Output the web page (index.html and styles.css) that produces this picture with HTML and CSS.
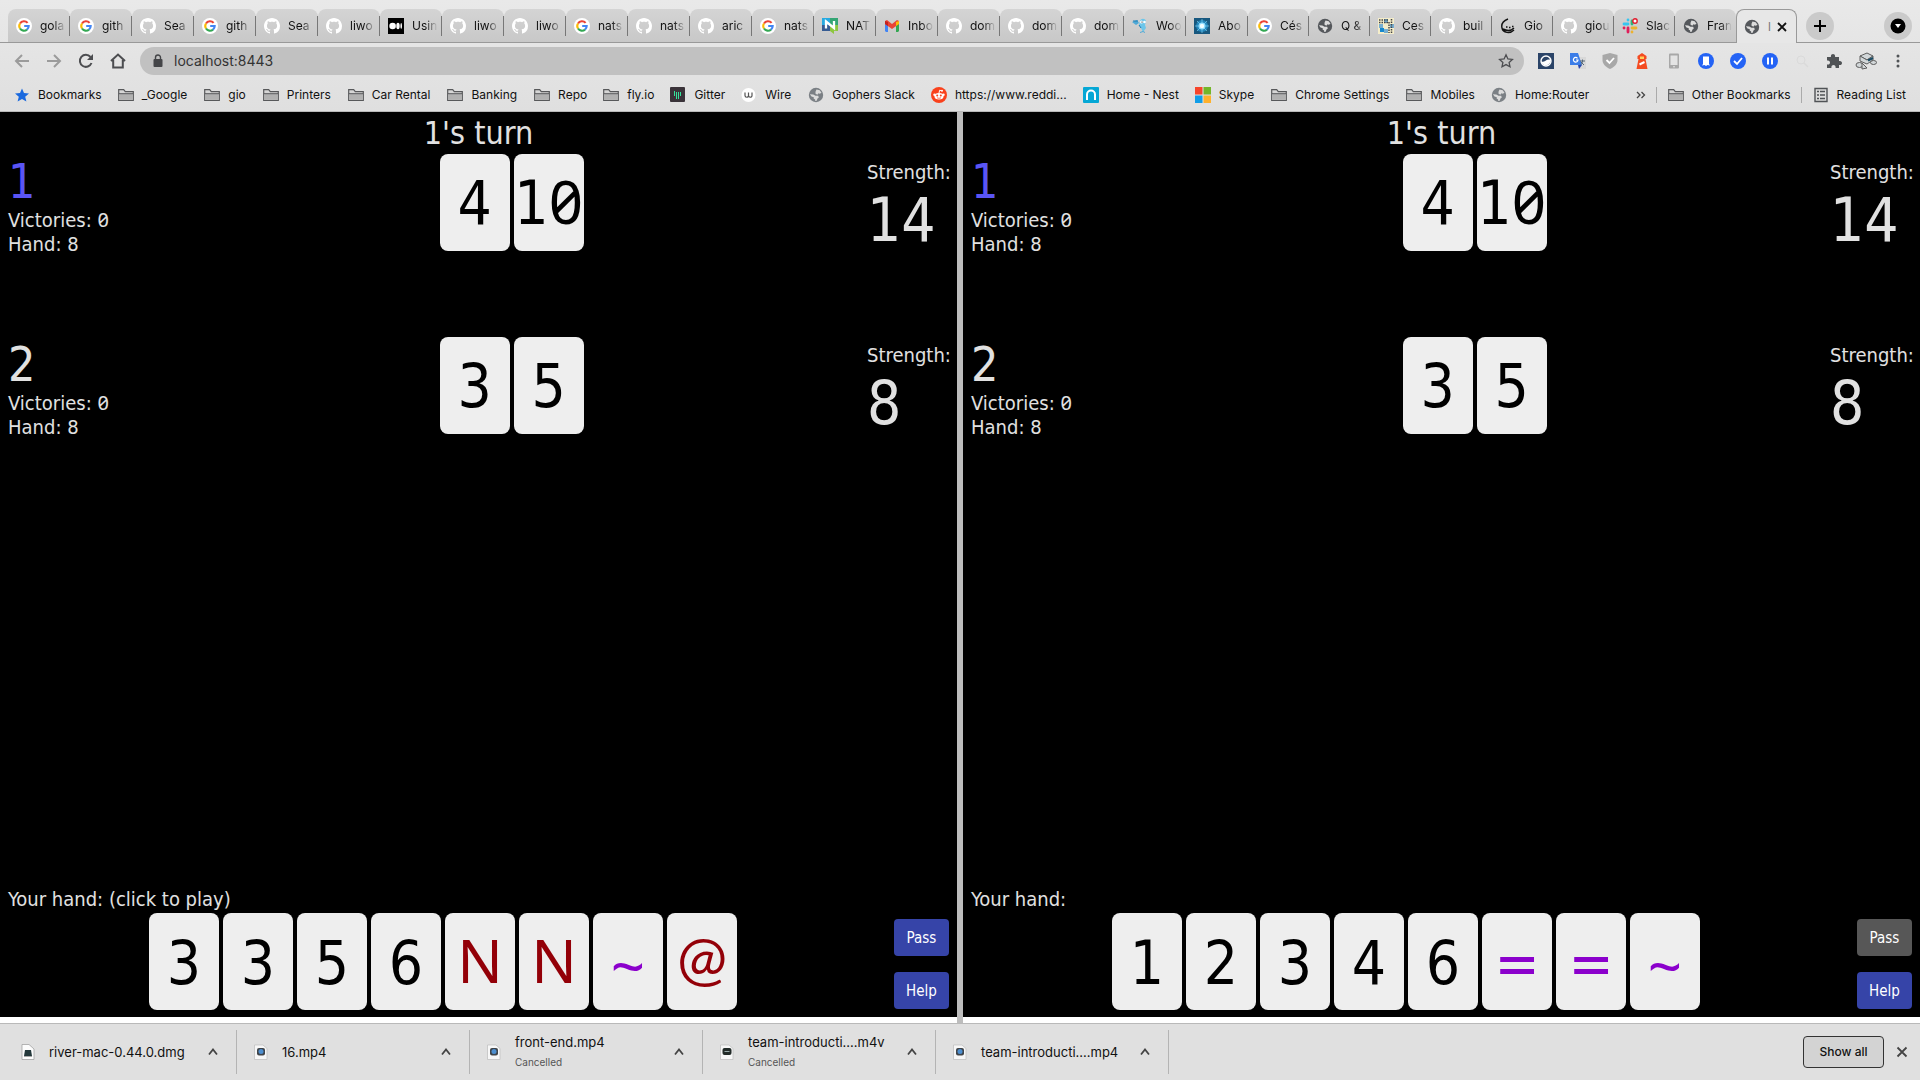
FILE: index.html
```html
<!DOCTYPE html>
<html lang="en">
<head>
<meta charset="utf-8">
<title>localhost:8443</title>
<link rel="stylesheet" href="styles.css">
</head>
<body>
<svg class="sprite" aria-hidden="true">
  <symbol id="google" viewBox="0 0 16 16"><circle cx="8" cy="8" r="8" fill="#fff"/><g fill="none" stroke-width="2.1"><path d="M4 5.500A4.700 4.700 0 0 1 11.600 4.900" stroke="#ea4335"/><path d="M4 5.500A4.700 4.700 0 0 0 4 10.500" stroke="#fbbc05"/><path d="M4 10.500A4.700 4.700 0 0 0 11 11.600" stroke="#34a853"/><path d="M11 11.600A4.700 4.700 0 0 0 12.700 8H8.200" stroke="#4285f4"/></g></symbol>
  <symbol id="github" viewBox="0 0 16 16"><path fill="#fff" d="M8 0C3.58 0 0 3.58 0 8c0 3.54 2.29 6.53 5.47 7.59.4.07.55-.17.55-.38 0-.19-.01-.82-.01-1.49-2.01.37-2.53-.49-2.69-.94-.09-.23-.48-.94-.82-1.13-.28-.15-.68-.52-.01-.53.63-.01 1.08.58 1.23.82.72 1.21 1.87.87 2.33.66.07-.52.28-.87.51-1.07-1.78-.2-3.64-.89-3.64-3.95 0-.87.31-1.59.82-2.15-.08-.2-.36-1.02.08-2.12 0 0 .67-.21 2.2.82.64-.18 1.32-.27 2-.27s1.36.09 2 .27c1.53-1.04 2.2-.82 2.2-.82.44 1.1.16 1.92.08 2.12.51.56.82 1.27.82 2.15 0 3.07-1.87 3.75-3.65 3.95.29.25.54.73.54 1.48 0 1.07-.01 1.93-.01 2.2 0 .21.15.46.55.38A8.01 8.01 0 0 0 16 8c0-4.42-3.58-8-8-8z"/></symbol>
  <symbol id="medium" viewBox="0 0 16 16"><path d="M0 0h16v16H0z"/><g fill="#fff"><circle cx="4.600" cy="8" r="3.300"/><ellipse cx="10" cy="8" rx="1.700" ry="3.200"/><ellipse cx="13.200" cy="8" rx=".8" ry="3"/></g></symbol>
  <symbol id="nats" viewBox="0 0 16 16"><path fill="#27aae1" d="M0 0h8v7H0z"/><path fill="#34a574" d="M8 0h8v7H8z"/><path fill="#375c93" d="M0 7h8v6H0z"/><path fill="#8dc63f" d="M8 7h8v6h-4v3l-4-3z"/><path d="M4 10.500V3.500L12 10V3" fill="none" stroke="#fff" stroke-width="2.300"/></symbol>
  <symbol id="gmail" viewBox="0 0 16 16"><path fill="#4285f4" d="M1 3h3v11H2l-1-1z"/><path fill="#34a853" d="M12 3h3v10l-1 1h-2z"/><path fill="#ea4335" d="M1 3l2-1 5 4 5-4 2 1v3l-7 5-7-5z"/><path fill="#c5221f" d="M1 3l3 1v4L1 6z"/><path fill="#fbbc04" d="M15 3l-3 1v4l3-2z"/></symbol>
  <symbol id="gopher" viewBox="0 0 16 16"><path d="M0 4l5-2 2 3-3 2" fill="#4fa9d6"/><path d="M8 3c1-3 5-3 6 0l-1 4 1 3-3 4-2-4-2-3z" fill="#6cc6ea"/><path d="M1 3h5M7 7l2 3" stroke="#1c7cb4" fill="none"/><circle cx="9.500" cy="4" r="1.500" fill="#fff"/><circle cx="12.500" cy="4" r="1.300" fill="#fff"/><circle cx="10" cy="4" r=".6"/><path d="M8 14.500l3-1 2 1" stroke="#4fa9d6" fill="none"/></symbol>
  <symbol id="spark" viewBox="0 0 16 16"><path fill="#18587f" d="M0 0h16v16H0z"/><circle cx="8" cy="8" r="6" fill="#2386bb"/><path stroke="#7dccee" stroke-width=".7" d="M8 1v14M1 8h14M3 3l10 10M13 3L3 13"/><circle cx="8" cy="8" r="3.500" fill="#8fdcff"/><circle cx="8" cy="8" r="2.200" fill="#f0fdff"/></symbol>
  <symbol id="globe" viewBox="0 0 16 16"><circle cx="8" cy="8" r="7.200" fill="currentColor"/><path fill="#dcdcdc" d="M8.500 2.600l3.200.6 1.800 2.600-1.700 1-1.300-.6-1.200 1.600-1.900-1.300.2-1.900zM1.900 7.300l3.400.1 2.200 1.300 2.700.1.600 1.800-1.300.9-.8 2.300-1.400.3-.2-1.700-1.500-.8.200-1.400-2.300-.8z"/></symbol>
  <symbol id="mosaic" viewBox="0 0 16 16"><path fill="#f4edca" d="M0 0h16v16H0z"/><path fill="#76aed1" d="M6 1h4v4H6zM1 6h4v4H1zM6 11h4v4H6zM12 6h4v4h-4z"/><path fill="#1688ce" d="M2 10h4v4H2z"/><path stroke="#444" stroke-width="1.500" stroke-dasharray="1.500 1" d="M1 2h9M1 4.500h9M11 4v11M13.500 1v14" fill="none"/></symbol>
  <symbol id="gio" viewBox="0 0 16 16"><path d="M8 1C3 3 1 6 2 10c1 5 8 6 12 2M3 11c4 2 8 2 11-1" fill="none" stroke="#111" stroke-width="1.400"/><path d="M6 9h1.500M9 9.500h1.500M12 8.500h1.500" stroke="#111" stroke-width="1.600"/></symbol>
  <symbol id="slack" viewBox="0 0 16 16"><g stroke-width="2.800" stroke-linecap="round"><path stroke="#36c5f0" d="M2 6h4M6 2v.1"/><path stroke="#2eb67d" d="M10 3v3"/><path stroke="#ecb22e" d="M10 10h4M10 14v-.1"/><path stroke="#e01e5a" d="M6 10v4M2 10h.1"/></g><circle cx="13" cy="3" r="2.200" fill="#fff" stroke="#e21b2d" stroke-width="1.400"/></symbol>
  <symbol id="folder" viewBox="0 0 16 16"><path d="M.7 13.500V2.700h5l1.600 2h8v8.800z" fill="#d6d6d6" stroke="#57585a" stroke-width="1.200"/><path d="M1.300 7h13.400v5.900H1.300z" fill="#b1b1b1"/><path d="M1 6.700h14" stroke="#57585a"/></symbol>
  <symbol id="chevron" viewBox="0 0 12 12"><path d="M2 8.500l4-5 4 5" fill="none" stroke="#444" stroke-width="1.800"/></symbol>
  <symbol id="movie" viewBox="0 0 16 16"><path fill="#f7f7f7" stroke="#bbb" stroke-width=".7" d="M1.500 1h8.500l4 3.500V15.500h-12.500z"/><rect x="4" y="4" width="8" height="7.500" rx="2" fill="#40454a"/><circle cx="8" cy="7.500" r="2.500" fill="#4d8fd0"/></symbol>
  <symbol id="video" viewBox="0 0 16 16"><path fill="#f7f7f7" stroke="#bbb" stroke-width=".7" d="M1.500 1h8.500l4 3.500V15.500h-12.500z"/><rect x="3.500" y="4" width="9" height="7" rx="2" fill="#222b28"/><path stroke="#9aa" d="M5.500 7.500h5"/></symbol>
  <symbol id="disk" viewBox="0 0 16 16"><path fill="#fcfcfc" stroke="#999" stroke-width=".7" d="M2 .5h7l5 4.500v10.500H2z"/><path fill="#24383b" d="M5 6h6l1 6H4z"/><path stroke="#aaa" d="M4 12.500h8"/></symbol>
</svg>

<header class="browser">
  <nav class="tabstrip" aria-label="Tabs">
    <div class="tabs">
      <button class="tab"><svg><use href="#google"/></svg><span>gola</span></button>
      <button class="tab"><svg><use href="#google"/></svg><span>gith</span></button>
      <button class="tab"><svg><use href="#github"/></svg><span>Sea</span></button>
      <button class="tab"><svg><use href="#google"/></svg><span>gith</span></button>
      <button class="tab"><svg><use href="#github"/></svg><span>Sea</span></button>
      <button class="tab"><svg><use href="#github"/></svg><span>liwo</span></button>
      <button class="tab"><svg><use href="#medium"/></svg><span>Usin</span></button>
      <button class="tab"><svg><use href="#github"/></svg><span>liwo</span></button>
      <button class="tab"><svg><use href="#github"/></svg><span>liwo</span></button>
      <button class="tab"><svg><use href="#google"/></svg><span>nats</span></button>
      <button class="tab"><svg><use href="#github"/></svg><span>nats</span></button>
      <button class="tab"><svg><use href="#github"/></svg><span>aric</span></button>
      <button class="tab"><svg><use href="#google"/></svg><span>nats</span></button>
      <button class="tab"><svg><use href="#nats"/></svg><span>NAT</span></button>
      <button class="tab"><svg><use href="#gmail"/></svg><span>Inbo</span></button>
      <button class="tab"><svg><use href="#github"/></svg><span>dom</span></button>
      <button class="tab"><svg><use href="#github"/></svg><span>dom</span></button>
      <button class="tab"><svg><use href="#github"/></svg><span>dom</span></button>
      <button class="tab"><svg><use href="#gopher"/></svg><span>Woo</span></button>
      <button class="tab"><svg><use href="#spark"/></svg><span>Abo</span></button>
      <button class="tab"><svg><use href="#google"/></svg><span>Cés</span></button>
      <button class="tab"><svg><use href="#globe"/></svg><span>Q &amp;</span></button>
      <button class="tab"><svg><use href="#mosaic"/></svg><span>Ces</span></button>
      <button class="tab"><svg><use href="#github"/></svg><span>buil</span></button>
      <button class="tab"><svg><use href="#gio"/></svg><span>Gio</span></button>
      <button class="tab"><svg><use href="#github"/></svg><span>giou</span></button>
      <button class="tab"><svg><use href="#slack"/></svg><span>Slac</span></button>
      <button class="tab last"><svg><use href="#globe"/></svg><span>Fran</span></button>
      <button class="tab active"><svg><use href="#globe"/></svg><span>l</span><svg class="close" viewBox="0 0 10 10"><path d="M1 1l8 8M9 1l-8 8" stroke="#111" stroke-width="1.800"/></svg></button>
    </div>
    <button class="round" aria-label="New tab"><svg viewBox="0 0 16 16"><path d="M8 2v12M2 8h12" stroke="#000" stroke-width="2"/></svg></button>
    <button class="round search" aria-label="Search tabs"><svg viewBox="0 0 16 16"><circle cx="8" cy="8" r="7.500"/><path d="M5 6h6l-3 4z" fill="#fff"/></svg></button>
  </nav>

  <div class="toolbar">
    <button class="tool dim" aria-label="Back"><svg viewBox="0 0 16 16"><path d="M15 8H2M8 2L2 8l6 6"/></svg></button>
    <button class="tool dim" aria-label="Forward"><svg viewBox="0 0 16 16"><path d="M1 8h13M8 2l6 6-6 6"/></svg></button>
    <button class="tool" aria-label="Reload"><svg viewBox="0 0 16 16"><path d="M13.500 10A6 6 0 1 1 12.500 4"/><path d="M15 1v6H9z" fill="#4c4d50" stroke="none"/></svg></button>
    <button class="tool" aria-label="Home"><svg viewBox="0 0 16 16"><path d="M1 8l7-6.500L15 8M3.200 7v7.500h9.600V7"/></svg></button>
    <div class="omnibox">
      <svg viewBox="0 0 16 16"><rect x="3.500" y="6" width="9" height="8" rx="1" fill="#444548"/><path d="M5.500 7V4.500a2.500 2.500 0 0 1 5 0V7" fill="none" stroke="#444548" stroke-width="1.400"/></svg>
      <input type="text" aria-label="Address" value="localhost:8443">
      <svg viewBox="0 0 16 16"><path d="M8 1.800l1.900 4.100 4.500.5-3.300 3 .9 4.400L8 11.600l-4 2.200.9-4.400-3.300-3 4.500-.5z" fill="none" stroke="#4c4d50" stroke-width="1.300"/></svg>
    </div>
    <div class="extensions">
      <svg viewBox="0 0 16 16"><path fill="#2b4468" d="M0 0h16v16H0z"/><circle cx="8" cy="8" r="5" fill="none" stroke="#fff" stroke-width="1.400"/><path d="M3 8c3 3 5-3 10-1-1 7-9 7-10 1z" fill="#fff"/></svg>
      <svg viewBox="0 0 16 16"><path fill="#d8d8d8" d="M6 4h10v12h-6z"/><path fill="#3b7de8" d="M0 0h8l4 12H0z"/><path d="M7.500 5.300A2.300 2.300 0 1 0 8 7H6" fill="none" stroke="#fff" stroke-width="1.200"/><path d="M10 8h5M12.500 6.500V8c0 2-1 3-2 4M11 9l3 3" stroke="#567" fill="none"/><path d="M8 12h4l-3 4z" fill="#2444b0"/></svg>
      <svg viewBox="0 0 16 16"><path fill="#a8a8a8" d="M8 0l7.500 2v5c0 4-3 7-7.500 9C3.500 14 .5 11 .5 7V2z"/><path d="M4.500 7l3 3 4.500-5" fill="none" stroke="#fff" stroke-width="1.800"/></svg>
      <svg viewBox="0 0 16 16"><path fill="#f44b21" d="M8 0l4.500 3v3h-1l2 10h-11l2-10h-1V3z"/><path fill="#ffd15a" d="M6 3.500h4V6H6z"/><path d="M5.500 11.500l5-2.500" stroke="#fff" stroke-width="2"/></svg>
      <svg viewBox="0 0 16 16"><rect x="3" y=".6" width="10" height="14.800" rx="1" fill="#a8a8a8"/><path fill="#e4e4e4" d="M4.500 2.500h7v9.500h-7z"/><circle cx="8" cy="13.700" r=".8" fill="#eee"/></svg>
      <svg viewBox="0 0 16 16"><circle cx="8" cy="8" r="8" fill="#2463f5"/><path fill="#fff" d="M5 3.500h6v7.500l1 1.500-2.500-.5-1.500 1-1.500-1-2.500.5 1-1.500z"/></svg>
      <svg viewBox="0 0 16 16"><circle cx="8" cy="8" r="8" fill="#2463f5"/><path d="M4 8l3 3 5-6" fill="none" stroke="#fff" stroke-width="1.800"/></svg>
      <svg viewBox="0 0 16 16"><circle cx="8" cy="8" r="8" fill="#2463f5"/><path d="M6 4.500v7M10 4.500v7" stroke="#fff" stroke-width="2"/></svg>
      <svg viewBox="0 0 16 16"><circle cx="7" cy="7" r="4" fill="none" stroke="#dadada"/><path d="M10 10l4 4" stroke="#dadada" stroke-width="1.500"/></svg>
      <svg viewBox="0 0 16 16"><path fill="#505356" d="M1 4h4c-1-4 5-4 4 0h4v4c4-1 4 5 0 4v3H9.500c1-4-5-4-4 0H1v-3.500c4 1 4-5 0-4z"/></svg>
      <svg class="wide" viewBox="0 0 22 18"><g fill="#d2d7d9" stroke="#5e5e5e"><path d="M5 4l7-3 6 3-6 4z"/><path d="M5 4v5l7 3 6-4V4l-6 4z"/><ellipse cx="4.500" cy="13" rx="3.500" ry="2.500"/><ellipse cx="18.500" cy="10.500" rx="3" ry="2"/><path d="M7 11l5 5-5 1z"/></g><path d="M13 8.500l5-2.500" stroke="#1b4b64" stroke-width="2"/></svg>
      <svg viewBox="0 0 16 16" fill="#505356"><circle cx="8" cy="3" r="1.500"/><circle cx="8" cy="8" r="1.500"/><circle cx="8" cy="13" r="1.500"/></svg>
    </div>
  </div>

  <nav class="bookmarks" aria-label="Bookmarks">
    <a href="#"><svg viewBox="0 0 16 16"><path fill="#1a69de" d="M8 1.500l2 4.600 5 .4-3.800 3.200 1.200 4.800L8 12l-4.400 2.500 1.200-4.800L1 6.500l5-.4z"/></svg>Bookmarks</a>
    <a class="folder" href="#"><svg><use href="#folder"/></svg>_Google</a>
    <a class="folder" href="#"><svg><use href="#folder"/></svg>gio</a>
    <a class="folder" href="#"><svg><use href="#folder"/></svg>Printers</a>
    <a class="folder" href="#"><svg><use href="#folder"/></svg>Car Rental</a>
    <a class="folder" href="#"><svg><use href="#folder"/></svg>Banking</a>
    <a href="#"><svg><use href="#folder"/></svg>Repo</a>
    <a href="#"><svg><use href="#folder"/></svg>fly.io</a>
    <a href="#"><svg viewBox="0 0 16 16"><rect width="15" height="15" rx="1" fill="#3a3339"/><path d="M4.500 4v5M6.500 5v7M8.500 5v7M10.500 5v4" stroke="#36e29a"/></svg>Gitter</a>
    <a class="folder" href="#"><svg viewBox="0 0 16 16"><circle cx="7.500" cy="8" r="7" fill="#fff"/><path d="M4 5.500v3a1.700 1.700 0 0 0 3.500 0v-3 3a1.700 1.700 0 0 0 3.500 0v-3" fill="none" stroke="#555" stroke-width="1.200"/></svg>Wire</a>
    <a href="#"><svg class="pale"><use href="#globe"/></svg>Gophers Slack</a>
    <a href="#"><svg viewBox="0 0 16 16"><circle cx="8" cy="8" r="8" fill="#f9411c"/><g fill="#fff"><ellipse cx="8" cy="9.300" rx="4.500" ry="3.200"/><circle cx="3.500" cy="7.700" r="1.200"/><circle cx="12.500" cy="7.700" r="1.200"/><circle cx="11" cy="3.800" r="1"/></g><path d="M8 6l.7-2.800 2 .6" stroke="#fff" fill="none"/><g fill="#f9411c"><circle cx="6.200" cy="8.600" r="1"/><circle cx="9.800" cy="8.600" r="1"/></g><path d="M6 10.800q2 1 4 0" stroke="#f9411c" fill="none" stroke-width=".7"/></svg>https://www.reddi...</a>
    <a href="#"><svg viewBox="0 0 16 16"><rect width="16" height="16" rx="1" fill="#05a7d5"/><path d="M4 13V7.500a4 4 0 0 1 8 0V13" fill="none" stroke="#fff" stroke-width="2"/></svg>Home - Nest</a>
    <a class="folder" href="#"><svg viewBox="0 0 16 16"><path fill="#f6452b" d="M0 0h7.500v7.500H0z"/><path fill="#73b629" d="M8.500 0H16v7.500H8.500z"/><path fill="#109de8" d="M0 8.500h7.500V16H0z"/><path fill="#feb12c" d="M8.500 8.500H16V16H8.500z"/></svg>Skype</a>
    <a class="folder" href="#"><svg><use href="#folder"/></svg>Chrome Settings</a>
    <a href="#"><svg><use href="#folder"/></svg>Mobiles</a>
    <a href="#"><svg class="pale"><use href="#globe"/></svg>Home:Router</a>
    <div class="more">
      <button aria-label="More bookmarks"><svg viewBox="0 0 10 10"><path d="M1 2l3 3-3 3M5.500 2l3 3-3 3" fill="none" stroke="#444" stroke-width="1.300"/></svg></button>
      <a class="ruled" href="#"><svg><use href="#folder"/></svg>Other Bookmarks</a>
      <a class="ruled" href="#"><svg viewBox="0 0 16 16"><path d="M2 1.500h12v13H2z" fill="#ddd" stroke="#505356" stroke-width="1.400"/><path d="M4 4.500h2M7 4.500h5M4 8h2M7 8h5M4 11.500h2M7 11.500h5" stroke="#505356" stroke-width="1.400"/></svg>Reading List</a>
    </div>
  </nav>
</header>

<main class="game">
  <section class="pane">
    <h1>1's turn</h1>
    <div class="player">
      <div><h2 class="current">1</h2><p>Victories: <span class="zero">0</span></p><p>Hand: 8</p></div>
      <div class="cards"><div class="card">4</div><div class="card">1<span class="zero">0</span></div></div>
      <div class="strength"><p>Strength:</p><strong>14</strong></div>
    </div>
    <div class="player">
      <div><h2>2</h2><p>Victories: <span class="zero">0</span></p><p>Hand: 8</p></div>
      <div class="cards"><div class="card">3</div><div class="card">5</div></div>
      <div class="strength"><p>Strength:</p><strong>8</strong></div>
    </div>
    <p class="hand-label">Your hand: (click to play)</p>
    <div class="hand">
      <div class="cards">
        <button class="card">3</button><button class="card">3</button><button class="card">5</button><button class="card">6</button><button class="card letter">N</button><button class="card letter">N</button><button class="card purple tilde">~</button><button class="card at">@</button>
      </div>
      <div class="actions"><button>Pass</button><button>Help</button></div>
    </div>
  </section>
  <section class="pane">
    <h1>1's turn</h1>
    <div class="player">
      <div><h2 class="current">1</h2><p>Victories: <span class="zero">0</span></p><p>Hand: 8</p></div>
      <div class="cards"><div class="card">4</div><div class="card">1<span class="zero">0</span></div></div>
      <div class="strength"><p>Strength:</p><strong>14</strong></div>
    </div>
    <div class="player">
      <div><h2>2</h2><p>Victories: <span class="zero">0</span></p><p>Hand: 8</p></div>
      <div class="cards"><div class="card">3</div><div class="card">5</div></div>
      <div class="strength"><p>Strength:</p><strong>8</strong></div>
    </div>
    <p class="hand-label">Your hand:</p>
    <div class="hand">
      <div class="cards">
        <button class="card">1</button><button class="card">2</button><button class="card">3</button><button class="card">4</button><button class="card">6</button><button class="card purple">=</button><button class="card purple">=</button><button class="card purple tilde">~</button>
      </div>
      <div class="actions"><button disabled>Pass</button><button>Help</button></div>
    </div>
  </section>
</main>

<footer class="downloads">
  <div class="download"><svg><use href="#disk"/></svg><div>river-mac-0.44.0.dmg</div><button aria-label="Options"><svg><use href="#chevron"/></svg></button></div>
  <div class="download"><svg><use href="#movie"/></svg><div>16.mp4</div><button aria-label="Options"><svg><use href="#chevron"/></svg></button></div>
  <div class="download"><svg><use href="#movie"/></svg><div>front-end.mp4<small>Cancelled</small></div><button aria-label="Options"><svg><use href="#chevron"/></svg></button></div>
  <div class="download"><svg><use href="#video"/></svg><div>team-introducti....m4v<small>Cancelled</small></div><button aria-label="Options"><svg><use href="#chevron"/></svg></button></div>
  <div class="download"><svg><use href="#movie"/></svg><div>team-introducti....mp4</div><button aria-label="Options"><svg><use href="#chevron"/></svg></button></div>
  <button class="show-all">Show all</button>
  <button class="dismiss" aria-label="Close"><svg viewBox="0 0 12 12"><path d="M1.500 1.500l9 9M10.500 1.500l-9 9" stroke="#444" stroke-width="1.800"/></svg></button>
</footer>
</body>
</html>
```
FILE: styles.css
```css
* { box-sizing: border-box; }
body {
  margin: 0;
  min-height: 100vh;
  display: flex;
  flex-direction: column;
  font: 12px/16px Inter, "Liberation Sans", sans-serif;
  color: #111;
  background: #fff;
}
button {
  margin: 0;
  padding: 0;
  border: 0;
  background: none;
  color: inherit;
  font: inherit;
}
h1, h2, p { margin: 0; font-weight: 400; }
svg { display: block; flex: none; width: 16px; height: 16px; }
.sprite { display: none; }

/* Browser chrome */
.browser {
  background: linear-gradient(#e9e9e9, #dfdfdf);
  border-bottom: 1px solid #b8b8b8;
}
.tabstrip {
  display: flex;
  height: 43px;
  padding: 9px 8px 0;
  box-shadow: inset 0 -1px #999;
}
.tabs { display: flex; flex: 1; min-width: 0; }
.tab {
  position: relative;
  display: flex;
  flex: 1 1 61px;
  min-width: 0;
  height: 33px;
  align-items: center;
  gap: 8px;
  padding: 0 3px 0 8px;
  border-radius: 8px 8px 0 0;
  background: linear-gradient(#d4d4d4, #c8c8c8);
  text-align: left;
  color: #55585c;
}
.tab:nth-child(-n+20) { flex-basis: 62px; }
.tab::after {
  content: "";
  position: absolute;
  right: 0;
  top: 7px;
  width: 1px;
  height: 20px;
  background: #777;
}
.tab.last::after, .tab.active::after { display: none; }
.tab span {
  flex: 1;
  min-width: 0;
  white-space: nowrap;
  color: #111;
  mask-image: linear-gradient(90deg, #000 50%, transparent 95%);
}
.tab.active {
  height: 34px;
  padding: 0 9px 0 7px;
  border: 1px solid #999;
  border-bottom: 0;
  background: #e7e7e7;
}
.tab.active span { color: #777; mask-image: none; }
.tab .close { width: 10px; height: 10px; }
.round {
  display: grid;
  place-items: center;
  width: 28px;
  height: 28px;
  margin: 3px 0 0 9px;
  border-radius: 50%;
  background: #cacaca;
}
.search { margin-left: 50px; }
.toolbar {
  display: flex;
  align-items: center;
  height: 36px;
  padding: 0 14px;
}
.tool { margin-right: 16px; }
.tool svg { fill: none; stroke: #4c4d50; stroke-width: 2; }
.dim svg { stroke: #9b9b9b; }
.omnibox {
  display: flex;
  flex: 1;
  align-items: center;
  gap: 8px;
  height: 28px;
  margin-right: 14px;
  margin-left: -2px;
  padding: 0 10px;
  border-radius: 14px;
  background: #c1c1c1;
}
.omnibox input {
  flex: 1;
  min-width: 0;
  padding: 0;
  border: 0;
  outline: 0;
  background: none;
  font: 14px/20px Inter, "Liberation Sans", sans-serif;
  color: #333;
}
.extensions { display: flex; align-items: center; gap: 16px; }
.extensions .wide { width: 22px; height: 18px; margin: 0 -3px; }
.bookmarks {
  display: flex;
  align-items: center;
  height: 32px;
  padding: 0 14px;
  gap: 16px;
  white-space: nowrap;
}
.bookmarks a {
  display: flex;
  gap: 8px;
  color: #111;
  text-decoration: none;
}
.bookmarks .folder { margin-right: 1px; }
.pale { color: #7b8085; }
.more { display: flex; align-items: center; gap: 10px; margin-left: auto; }
.more button svg { width: 10px; height: 10px; }
.more .ruled { padding-left: 11px; border-left: 1px solid #aaa; }

/* Game */
.game {
  display: grid;
  grid-template-columns: 1fr 1fr;
  flex: 1;
  gap: 6px;
  background: #bdbdbd;
  font: 20px/24px "DejaVu Sans Condensed", "DejaVu Sans", sans-serif;
}
.pane {
  display: flex;
  flex-direction: column;
  padding: 0 8px 7px;
  border-bottom: 6px solid #fff;
  background: #000;
  color: #e1e1e1;
}
.pane h1 { font-size: 32px; line-height: 42px; text-align: center; }
.zero { font-family: "Noto Sans", sans-serif; font-feature-settings: "zero"; line-height: 1px; }
.player {
  display: grid;
  grid-template-columns: 101fr 100fr 82px;
  height: 183px;
}
.player h2 { font-size: 48px; line-height: 54px; }
.player .current { color: #5a55f5; }
.cards { display: flex; gap: 4px; }
.card {
  width: 70px;
  height: 97px;
  padding-top: 2px;
  border-radius: 8px;
  background: #eee;
  color: #000;
  font-size: 60px;
  line-height: 95px;
  text-align: center;
}
.letter, .at { color: #930008; }
.letter { padding: 0 0 4px; font-family: "Noto Sans", sans-serif; }
.purple { color: #8b00cc; }
.tilde { padding-top: 6px; font-family: "Noto Sans", sans-serif; }
.at { padding: 0 0 10px; font-family: Lato, sans-serif; }
.strength { padding-top: 6px; }
.strength strong { display: block; font-size: 60px; font-weight: 400; line-height: 72px; }
.hand-label { margin-top: auto; }
.hand { display: flex; align-items: flex-end; padding-top: 2px; }
.hand .cards { flex: 1; justify-content: center; }
.hand .card { line-height: 80px; }
.actions {
  display: flex;
  flex-direction: column;
  gap: 16px;
  margin-left: 16px;
  padding-bottom: 1px;
}
.actions button {
  width: 55px;
  height: 37px;
  border-radius: 4px;
  background: #3644a8;
  color: #fff;
  font-size: 15px;
}
.actions button:disabled { background: #575757; }

/* Download shelf */
.downloads {
  display: flex;
  align-items: center;
  height: 57px;
  padding: 0 12px 0 4px;
  border-top: 1px solid #b9b9b9;
  background: #e0e0e0;
  font-size: 13px;
}
.download {
  display: flex;
  align-items: center;
  gap: 13px;
  width: 233px;
  height: 44px;
  padding: 0 17px 0 16px;
  border-right: 1px solid #b4b4b4;
}
.download div { flex: 1; white-space: nowrap; }
.download small { display: block; padding-top: 4px; font-size: 10px; color: #555; }
.download button svg, .dismiss svg { width: 12px; height: 12px; }
.show-all {
  width: 81px;
  height: 32px;
  margin-left: auto;
  border: 1px solid #333;
  border-radius: 4px;
  background: #d3d3d3;
  font-size: 12px;
  font-weight: 500;
}
.dismiss { margin-left: 12px; }
```
